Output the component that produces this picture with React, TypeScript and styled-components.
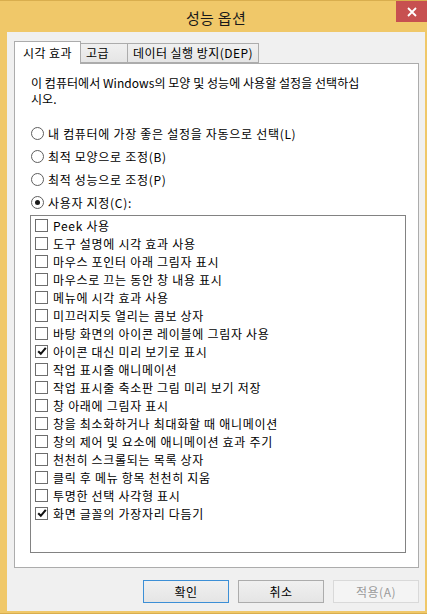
import { useState } from "react";
import styled, { createGlobalStyle } from "styled-components";

const font = `"Noto Sans CJK KR", "Noto Sans", "Liberation Sans", sans-serif`;

const GlobalStyle = createGlobalStyle`
  html, body {
    margin: 0;
    padding: 0;
    background: #f0c869;
  }
  * {
    box-sizing: border-box;
  }
`;

const Frame = styled.div`
  width: 427px;
  height: 614px;
  background: #f0c869;
  border-top: 1px solid #d9ae4e;
  border-bottom: 1px solid #d9ae4e;
  display: flex;
  flex-direction: column;
  padding: 0 2px 2px 7px;
  font-family: ${font};
  color: #000;
  overflow: hidden;
`;

const TitleBar = styled.div`
  height: 31px;
  margin-left: -7px;
  margin-right: -2px;
  display: grid;
  grid-template-columns: 1fr auto 1fr;
  align-items: start;
`;

const Title = styled.div`
  grid-column: 2;
  font-size: 15px;
  line-height: 15px;
  padding-top: 9px;
  padding-left: 5px;
  letter-spacing: 0.3px;
  color: #1a1a1a;
`;

const CloseButton = styled.button`
  grid-column: 3;
  justify-self: end;
  width: 31px;
  height: 21px;
  border: none;
  background: #c75050;
  color: #fff;
  display: flex;
  align-items: center;
  justify-content: center;
  padding: 0;
  cursor: pointer;
`;

const Client = styled.div`
  flex: 1;
  background: #f0f0f0;
  display: flex;
  flex-direction: column;
  padding: 9px 6px 8px 7px;
`;

const TabStrip = styled.div`
  height: 22px;
  display: flex;
  align-items: flex-end;
  position: relative;
  z-index: 1;
`;

const Tab = styled.div<{ $active?: boolean; $w: number }>`
  width: ${({ $w }) => $w}px;
  height: ${({ $active }) => ($active ? 23 : 20)}px;
  margin-bottom: ${({ $active }) => ($active ? -1 : 0)}px;
  border: 1px solid #acacac;
  border-bottom: ${({ $active }) => ($active ? "none" : "1px solid #acacac")};
  border-left: ${({ $active }) => ($active ? "1px solid #acacac" : "none")};
  background: ${({ $active }) =>
    $active ? "#fff" : "linear-gradient(#f0f0f0, #e5e5e5)"};
  font-size: 12px;
  line-height: 18px;
  letter-spacing: 0.45px;
  padding-left: ${({ $active }) => ($active ? 8 : 5)}px;
  padding-top: ${({ $active }) => ($active ? 2 : 0)}px;
  white-space: nowrap;
`;

const Panel = styled.div`
  height: 505px;
  background: #fff;
  border: 1px solid #acacac;
  padding: 11px 12px 14px 15px;
  display: flex;
  flex-direction: column;
`;

const Description = styled.p`
  margin: 0 0 15px 1px;
  font-size: 12px;
  line-height: 16px;
  letter-spacing: 0.05px;
`;

const RadioRow = styled.label`
  height: 23px;
  display: flex;
  align-items: center;
  gap: 4px;
  font-size: 12px;
  letter-spacing: 0.7px;
  cursor: pointer;
`;

const RadioCircle = styled.span<{ $on: boolean }>`
  width: 13px;
  height: 13px;
  border-radius: 50%;
  border: 1px solid #5e5e5e;
  background: #fff;
  display: flex;
  align-items: center;
  justify-content: center;
  margin-left: 1px;

  &::after {
    content: "";
    width: 5px;
    height: 5px;
    border-radius: 50%;
    background: ${({ $on }) => ($on ? "#1a1a1a" : "transparent")};
  }
`;

const ListBox = styled.div`
  margin-top: 1px;
  height: 338px;
  border: 1px solid #828282;
  padding: 0 0 0 4px;
  display: flex;
  flex-direction: column;
`;

const CheckRow = styled.label`
  height: 18px;
  display: flex;
  align-items: center;
  gap: 5px;
  font-size: 12px;
  letter-spacing: 0.7px;
  cursor: pointer;
  white-space: nowrap;
`;

const CheckBox = styled.span`
  width: 13px;
  height: 13px;
  border: 1px solid #6d6d6d;
  background: #fff;
  display: flex;
  align-items: center;
  justify-content: center;
`;

const ButtonRow = styled.div`
  margin-top: 12px;
  display: flex;
  justify-content: flex-end;
  gap: 9px;
`;

const DialogButton = styled.button<{ $default?: boolean }>`
  width: 86px;
  height: 23px;
  font-family: ${font};
  font-size: 12px;
  letter-spacing: 0.5px;
  color: #000;
  border: 1px solid ${({ $default }) => ($default ? "#3c8fd6" : "#acacac")};
  background: linear-gradient(#f0f0f0, #e5e5e5);
  padding: 0;
  cursor: pointer;

  &:disabled {
    color: #9a9a9a;
    border-color: #d9d9d9;
    background: #f4f4f4;
    cursor: default;
  }
`;

const radios = [
  "내 컴퓨터에 가장 좋은 설정을 자동으로 선택(L)",
  "최적 모양으로 조정(B)",
  "최적 성능으로 조정(P)",
  "사용자 지정(C):",
];

const effects = [
  { label: "Peek 사용", on: false },
  { label: "도구 설명에 시각 효과 사용", on: false },
  { label: "마우스 포인터 아래 그림자 표시", on: false },
  { label: "마우스로 끄는 동안 창 내용 표시", on: false },
  { label: "메뉴에 시각 효과 사용", on: false },
  { label: "미끄러지듯 열리는 콤보 상자", on: false },
  { label: "바탕 화면의 아이콘 레이블에 그림자 사용", on: false },
  { label: "아이콘 대신 미리 보기로 표시", on: true },
  { label: "작업 표시줄 애니메이션", on: false },
  { label: "작업 표시줄 축소판 그림 미리 보기 저장", on: false },
  { label: "창 아래에 그림자 표시", on: false },
  { label: "창을 최소화하거나 최대화할 때 애니메이션", on: false },
  { label: "창의 제어 및 요소에 애니메이션 효과 주기", on: false },
  { label: "천천히 스크롤되는 목록 상자", on: false },
  { label: "클릭 후 메뉴 항목 천천히 지움", on: false },
  { label: "투명한 선택 사각형 표시", on: false },
  { label: "화면 글꼴의 가장자리 다듬기", on: true },
];

function Check() {
  return (
    <svg width="10" height="10" viewBox="0 0 10 10">
      <path d="M1.2 5.2 L3.8 7.8 L8.8 1.8" fill="none" stroke="#111" strokeWidth="2.1" />
    </svg>
  );
}

export default function App() {
  const [mode, setMode] = useState(3);
  const [checks, setChecks] = useState(effects.map((e) => e.on));

  const toggle = (i: number) => {
    setChecks((prev) => prev.map((v, j) => (j === i ? !v : v)));
  };

  return (
    <>
      <GlobalStyle />
      <Frame>
        <TitleBar>
          <Title>성능 옵션</Title>
          <CloseButton aria-label="닫기">
            <svg width="10" height="10" viewBox="0 0 10 10">
              <path d="M1 1 L9 9 M9 1 L1 9" stroke="#fff" strokeWidth="1.8" />
            </svg>
          </CloseButton>
        </TitleBar>
        <Client>
          <TabStrip>
            <Tab $active $w={67}>시각 효과</Tab>
            <Tab $w={47}>고급</Tab>
            <Tab $w={131}>데이터 실행 방지(DEP)</Tab>
          </TabStrip>
          <Panel>
            <Description>
              이 컴퓨터에서 Windows의 모양 및 성능에 사용할 설정을 선택하십
              <br />
              시오.
            </Description>
            {radios.map((r, i) => (
              <RadioRow key={r} onClick={() => setMode(i)}>
                <RadioCircle $on={mode === i} />
                {r}
              </RadioRow>
            ))}
            <ListBox>
              {effects.map((e, i) => (
                <CheckRow key={e.label} onClick={() => toggle(i)}>
                  <CheckBox>{checks[i] && <Check />}</CheckBox>
                  {e.label}
                </CheckRow>
              ))}
            </ListBox>
          </Panel>
          <ButtonRow>
            <DialogButton $default>확인</DialogButton>
            <DialogButton>취소</DialogButton>
            <DialogButton disabled>적용(A)</DialogButton>
          </ButtonRow>
        </Client>
      </Frame>
    </>
  );
}
